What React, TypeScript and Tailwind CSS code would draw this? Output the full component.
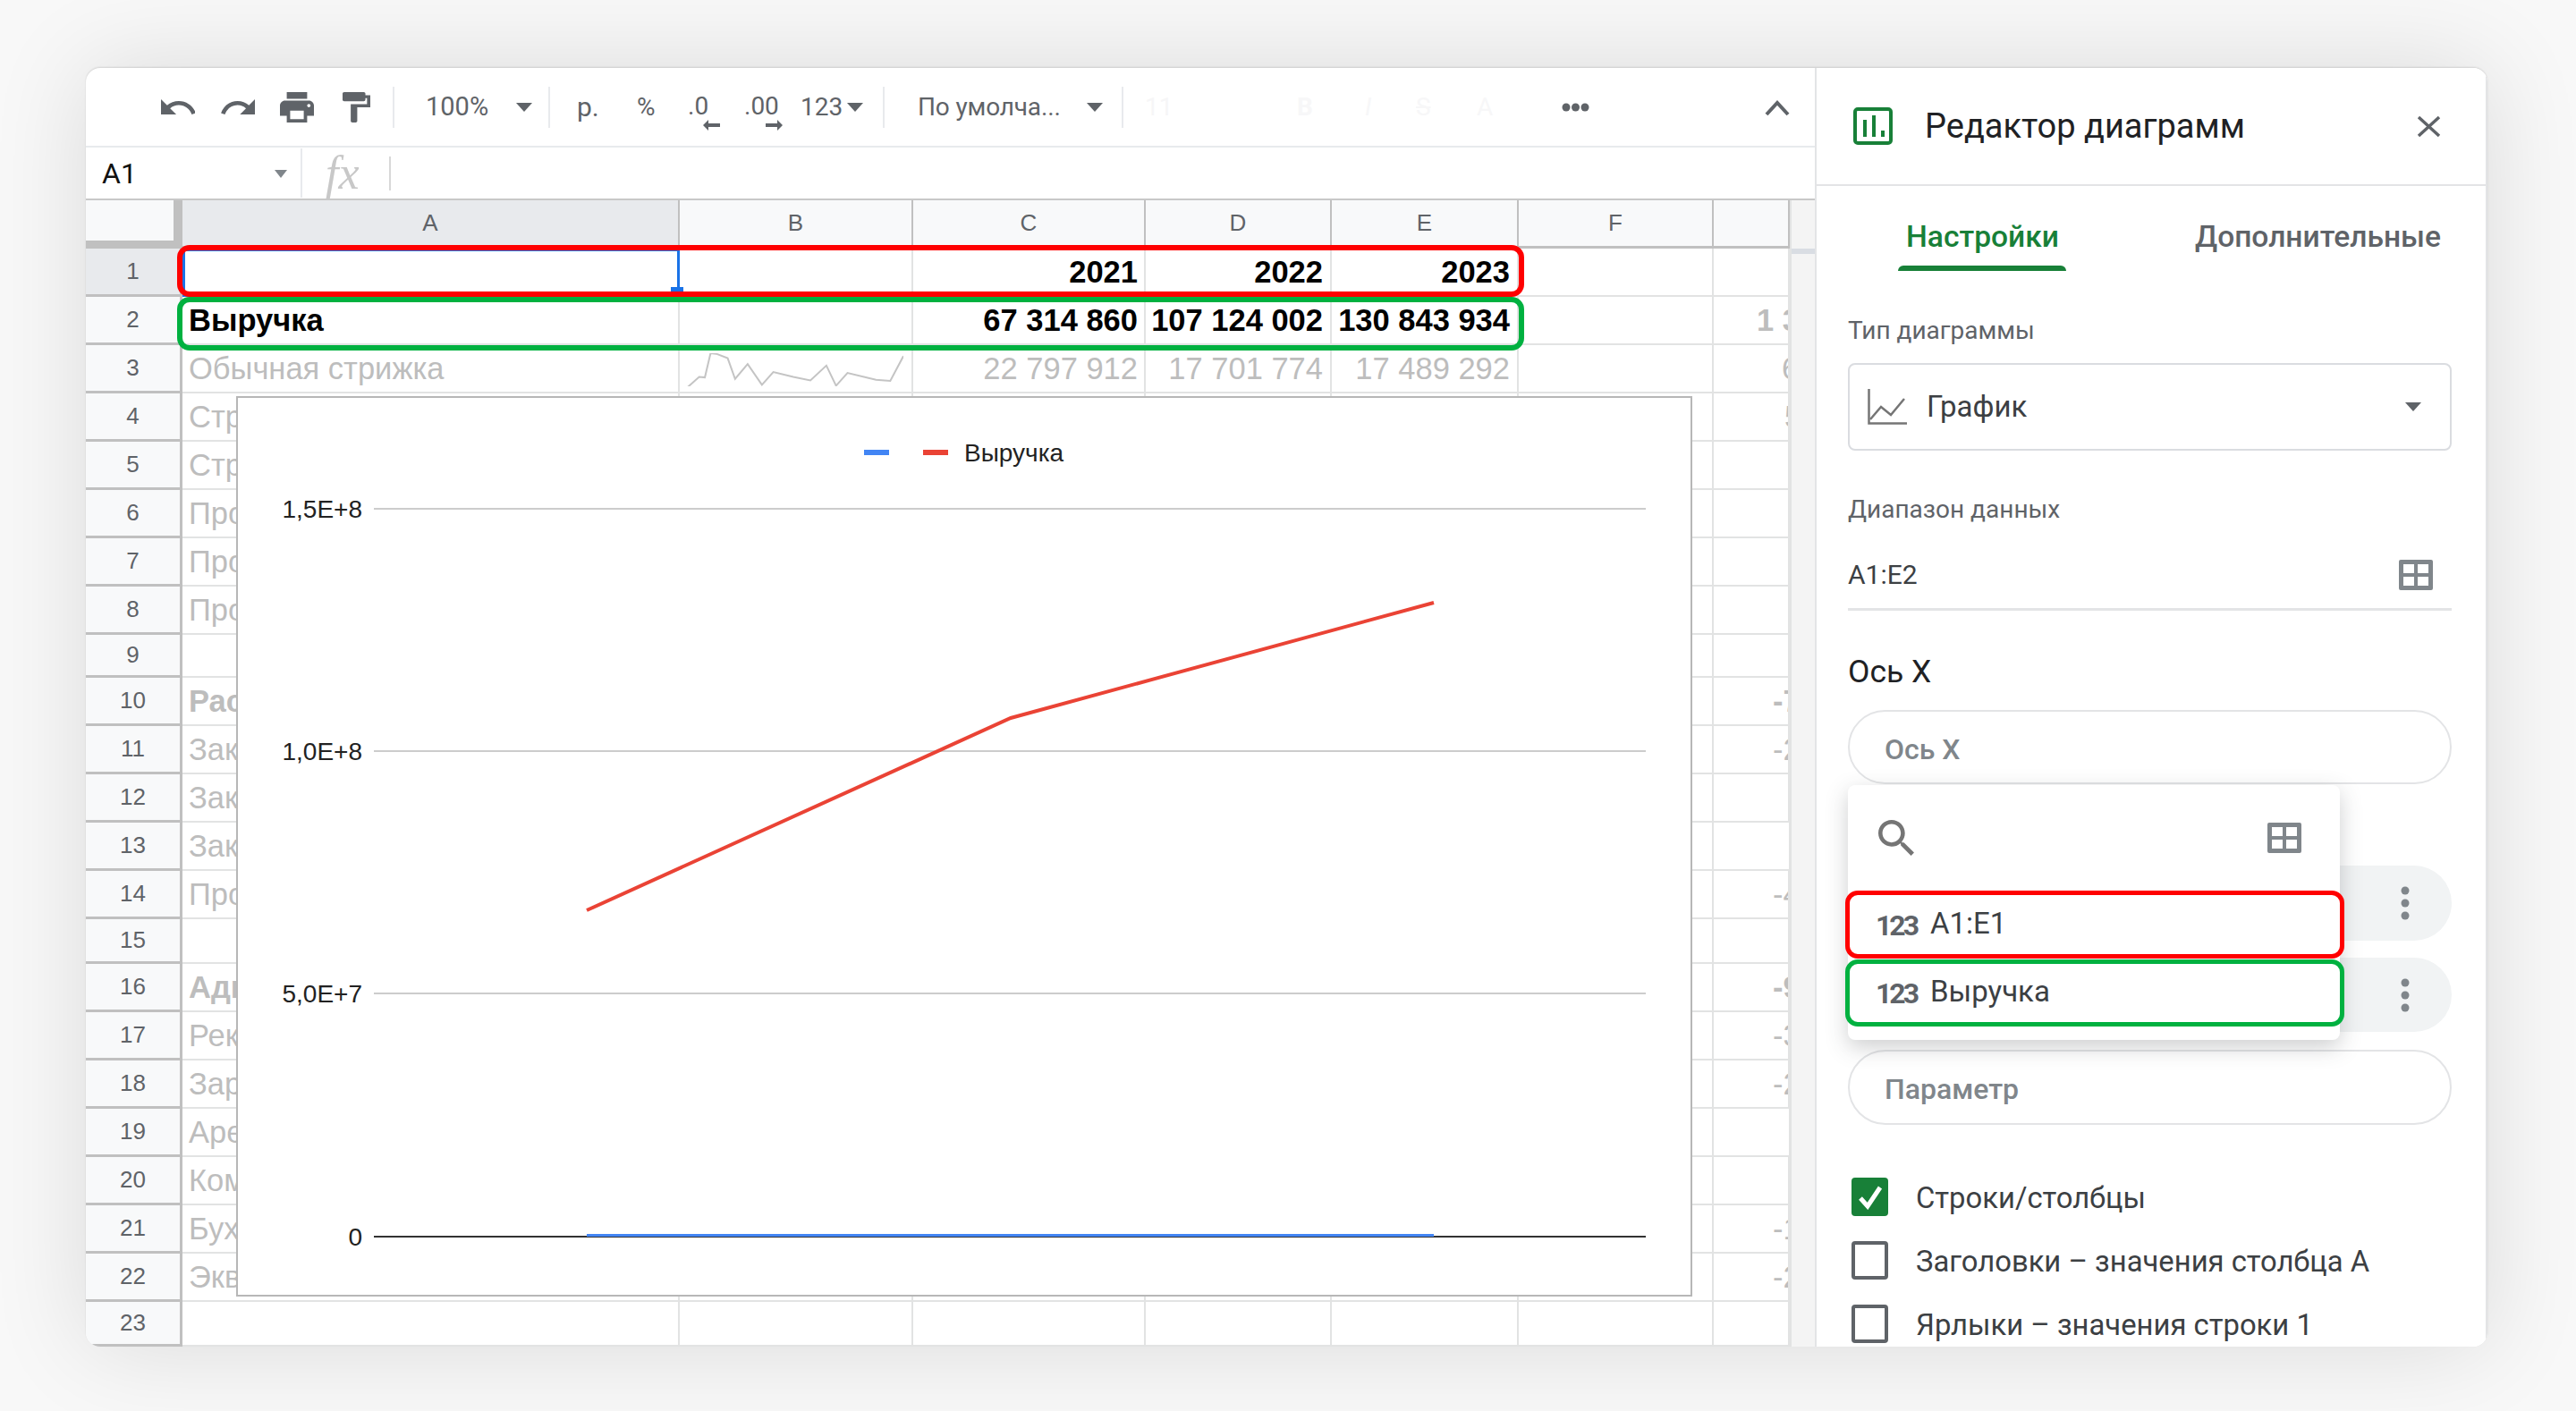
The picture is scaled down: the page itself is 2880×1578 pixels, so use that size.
import React from "react";

const Caret = ({ className = "" }: { className?: string }) => (
  <svg width="18" height="10" viewBox="0 0 18 10" className={`shrink-0 ${className}`}>
    <path d="M0 0h18L9 10z" fill="#5f6368" />
  </svg>
);

const Sep = ({ className = "" }: { className?: string }) => <div className={`w-[2px] h-[46px] bg-[#e8eaed] shrink-0 ${className}`} />;

const GridIcon = () => (
  <svg width="38" height="34" viewBox="0 0 38 34" className="shrink-0">
    <path fillRule="evenodd" clipRule="evenodd" d="M2 0h34a2 2 0 0 1 2 2v30a2 2 0 0 1-2 2H2a2 2 0 0 1-2-2V2a2 2 0 0 1 2-2zM5 5v10h12V5zM21 5v10h12V5zM5 19v10h12V19zM21 19v10h12V19z" fill="#80868b" />
  </svg>
);

const Kebab = () => (
  <svg width="10" height="38" viewBox="0 0 10 38">
    <circle cx="5" cy="5" r="4.5" fill="#80868b" />
    <circle cx="5" cy="19" r="4.5" fill="#80868b" />
    <circle cx="5" cy="33" r="4.5" fill="#80868b" />
  </svg>
);

const ArrowL = () => (
  <svg width="19" height="12" viewBox="0 0 19 12"><path d="M6 0v4h13v4H6v4L0 6z" fill="#5f6368" /></svg>
);
const ArrowR = () => (
  <svg width="19" height="12" viewBox="0 0 19 12"><path d="M13 0v4H0v4h13v4l6-6z" fill="#5f6368" /></svg>
);

const rows: { n: number; a: string; bold?: boolean; c?: string; d?: string; e?: string; g?: string; gp?: string; black?: boolean; h?: string }[] = [
  { n: 1, a: "", c: "2021", d: "2022", e: "2023", black: true, bold: true },
  { n: 2, a: "Выручка", c: "67 314 860", d: "107 124 002", e: "130 843 934", black: true, bold: true, g: "1 345", gp: "pl-[48px]" },
  { n: 3, a: "Обычная стрижка", c: "22 797 912", d: "17 701 774", e: "17 489 292", g: "6", gp: "pl-[76px]" },
  { n: 4, a: "Стрижка бороды", g: "5", gp: "pl-[79px]" },
  { n: 5, a: "Стрижка машинкой" },
  { n: 6, a: "Продажа" },
  { n: 7, a: "Продажа" },
  { n: 8, a: "Продажа" },
  { n: 9, a: "", h: "h-[48px]" },
  { n: 10, a: "Расходы", bold: true, g: "-7", gp: "pl-[66px]" },
  { n: 11, a: "Закупка", g: "-2", gp: "pl-[66px]" },
  { n: 12, a: "Закупка" },
  { n: 13, a: "Закупка", g: "5", gp: "pl-[84px]" },
  { n: 14, a: "Продвижение", g: "-4", gp: "pl-[66px]" },
  { n: 15, a: "", h: "h-[50px]" },
  { n: 16, a: "Административные", bold: true, g: "-9", gp: "pl-[66px]" },
  { n: 17, a: "Реклама", g: "-3", gp: "pl-[66px]" },
  { n: 18, a: "Зарплата", g: "-2", gp: "pl-[66px]" },
  { n: 19, a: "Аренда", g: "5", gp: "pl-[84px]" },
  { n: 20, a: "Коммунальные" },
  { n: 21, a: "Бухгалтерия", g: "-1", gp: "pl-[66px]" },
  { n: 22, a: "Эквайринг", g: "-2", gp: "pl-[66px]" },
];

const colHeads = [
  { l: "A", w: "w-[556px]", sel: true },
  { l: "B", w: "w-[261px]" },
  { l: "C", w: "w-[260px]" },
  { l: "D", w: "w-[208px]" },
  { l: "E", w: "w-[209px]" },
  { l: "F", w: "w-[218px]" },
  { l: "", w: "w-[85px]" },
];

const cell = "shrink-0 h-full border-r-2 border-b-2 border-[#e2e3e3] overflow-hidden whitespace-nowrap flex items-center";

function Row({ r }: { r: (typeof rows)[number] }) {
  const tone = r.black ? "text-black" : "text-[#bdbdbd]";
  const weight = r.bold ? "font-bold" : "";
  return (
    <div className={`flex ${r.h ?? "h-[54px]"} shrink-0 text-[34.5px] ${tone} ${weight}`}>
      <div className={`w-[108px] shrink-0 h-full flex items-center justify-center text-[26px] font-normal text-[#5f6368] border-r-[3px] border-b-[3px] border-[#c0c0c0] ${r.n === 1 ? "bg-[#e8eaed]" : "bg-[#f8f9fa]"}`}>
        {r.n}
      </div>
      <div className={`${cell} w-[556px] pl-[7px] pt-[2px]`}>{r.a}</div>
      <div className={`${cell} w-[261px]`}>
        {r.n === 3 && (
          <svg className="ml-[7px] mt-[3px]" width="243" height="37" viewBox="1062 968 381 112" preserveAspectRatio="none">
            <polyline
              points="1062,1088 1085,1048 1095,1050 1105,968 1115,970 1135,985 1148,1055 1170,1005 1195,1075 1215,1032 1250,1048 1280,1060 1308,1010 1325,1078 1345,1035 1395,1058 1420,1062 1443,978"
              fill="none"
              stroke="#c4c4c4"
              strokeWidth="2"
              vectorEffect="non-scaling-stroke"
            />
          </svg>
        )}
      </div>
      <div className={`${cell} w-[260px] justify-end pr-[7px] pt-[2px]`}>{r.c}</div>
      <div className={`${cell} w-[208px] justify-end pr-[8px] pt-[2px]`}>{r.d}</div>
      <div className={`${cell} w-[209px] justify-end pr-[8px] pt-[2px]`}>{r.e}</div>
      <div className={`${cell} w-[218px]`} />
      <div className={`${cell} w-[85px] border-r-0 pt-[2px] text-[#bdbdbd] ${r.gp ?? ""}`}>{r.g}</div>
    </div>
  );
}

function Chart() {
  const f = { fontFamily: "'Liberation Sans', Arial, sans-serif" };
  const labels = [
    { t: "1,5E+8", y: 124 },
    { t: "1,0E+8", y: 395 },
    { t: "5,0E+7", y: 666 },
    { t: "0", y: 938 },
  ];
  return (
    <div className="absolute left-[168px] top-[367px] w-[1628px] h-[1007px] bg-white border-2 border-[#b7b7b7]">
      <svg width="1624" height="1003" viewBox="0 0 1624 1003" className="block">
        <rect x="700" y="58" width="28" height="6" fill="#4285f4" />
        <rect x="766" y="58" width="28" height="6" fill="#ea4335" />
        <text x="812" y="71" fontSize="28" fill="#222" style={f}>Выручка</text>
        {labels.map((l, i) => (
          <g key={l.t}>
            <text x="139" y={l.y + 10} textAnchor="end" fontSize="28" fill="#222" style={f}>{l.t}</text>
            <line x1="152" x2="1574" y1={l.y} y2={l.y} stroke={i === 3 ? "#333" : "#ccc"} strokeWidth="2" />
          </g>
        ))}
        <line x1="390" x2="1337" y1="936.5" y2="936.5" stroke="#4285f4" strokeWidth="3" />
        <polyline points="390,573 864,358 1337,229" fill="none" stroke="#ea4335" strokeWidth="4" />
      </svg>
    </div>
  );
}

function Toolbar() {
  const t = "shrink-0 whitespace-nowrap text-[28px] text-[#5f6368] leading-none";
  return (
    <div className="h-[89px] flex items-center pl-[84px] border-b-2 border-[#e8eaed] font-['Roboto',sans-serif] relative">
      <svg width="38" height="17" viewBox="2 7 20 9" preserveAspectRatio="none" className="shrink-0">
        <path fill="#5f6368" d="M12.5 8c-2.65 0-5.05.99-6.9 2.6L2 7v9h9l-3.62-3.62c1.39-1.16 3.16-1.88 5.12-1.88 3.54 0 6.55 2.31 7.6 5.5l2.37-.78C21.08 11.03 17.15 8 12.5 8z" />
      </svg>
      <svg width="38" height="17" viewBox="1.5 7 20.5 9" preserveAspectRatio="none" className="shrink-0 ml-[29px]">
        <path fill="#5f6368" d="M18.4 10.6C16.55 8.99 14.15 8 11.5 8c-4.65 0-8.58 3.03-9.96 7.22L3.9 16c1.05-3.19 4.05-5.5 7.6-5.5 1.95 0 3.73.72 5.12 1.88L13 16h9V7l-3.6 3.6z" />
      </svg>
      <svg width="38" height="34" viewBox="2 3 20 18" preserveAspectRatio="none" className="shrink-0 ml-[28px]">
        <path fill="#5f6368" d="M19 8H5c-1.66 0-3 1.34-3 3v6h4v4h12v-4h4v-6c0-1.66-1.34-3-3-3zm-3 11H8v-5h8v5zm3-7c-.55 0-1-.45-1-1s.45-1 1-1 1 .45 1 1-.45 1-1 1zm-1-9H6v4h12V3z" />
      </svg>
      <svg width="31" height="34" viewBox="4 2 17 20" preserveAspectRatio="none" className="shrink-0 ml-[32px]">
        <path fill="#5f6368" d="M18 4V3c0-.55-.45-1-1-1H5c-.55 0-1 .45-1 1v4c0 .55.45 1 1 1h12c.55 0 1-.45 1-1V6h1v4H9v11c0 .55.45 1 1 1h2c.55 0 1-.45 1-1v-9h8V4h-3z" />
      </svg>
      <Sep className="ml-[25px]" />
      <span className={`${t} ml-[35px] w-[68px] text-[29px]`}>100%</span>
      <Caret className="ml-[33px]" />
      <Sep className="ml-[18px]" />
      <span className={`${t} ml-[30px] w-[23px] text-[30px]`}>р.</span>
      <span className={`${t} ml-[44px] w-[20px]`}>%</span>
      <div className="relative ml-[37px] w-[23px] shrink-0">
        <span className={t}>.0</span>
        <div className="absolute left-[17px] top-[29px]"><ArrowL /></div>
      </div>
      <div className="relative ml-[40px] w-[39px] shrink-0">
        <span className={t}>.00</span>
        <div className="absolute left-[24px] top-[29px]"><ArrowR /></div>
      </div>
      <span className={`${t} ml-[24px] w-[47px]`}>123</span>
      <Caret className="ml-[5px]" />
      <Sep className="ml-[22px]" />
      <span className={`${t} ml-[37px] w-[161px] tracking-[-0.15px]`}>По умолча...</span>
      <Caret className="ml-[28px]" />
      <Sep className="ml-[21px]" />
      <span className={`${t} ml-[24px] w-[30px] text-[#f6f6f7]`}>11</span>
      <span className={`${t} ml-[140px] w-[20px] text-[#f7f7f8] font-bold`}>B</span>
      <span className={`${t} ml-[56px] w-[20px] text-[#f7f7f8] italic`}>I</span>
      <span className={`${t} ml-[37px] w-[20px] text-[#f7f7f8] line-through`}>S</span>
      <span className={`${t} ml-[48px] w-[30px] text-[#f7f7f8]`}>A</span>
      <svg width="31" height="10" viewBox="0 0 31 10" className="shrink-0 ml-[65px]">
        <circle cx="5" cy="5" r="4.5" fill="#5f6368" /><circle cx="15.5" cy="5" r="4.5" fill="#5f6368" /><circle cx="26" cy="5" r="4.5" fill="#5f6368" />
      </svg>
      <svg width="28" height="18" viewBox="0 0 28 18" className="absolute left-[1877px] top-[36px]">
        <path d="M2 16 14 3l12 13" fill="none" stroke="#5f6368" strokeWidth="4" />
      </svg>
    </div>
  );
}

function FormulaBar() {
  return (
    <div className="h-[57px] flex items-center relative">
      <span className="ml-[18px] w-[174px] text-[32px] text-[#111] font-['Roboto',sans-serif] leading-none shrink-0">A1</span>
      <svg width="14" height="9" viewBox="0 0 14 9" className="shrink-0 ml-[19px] mt-[2px]"><path d="M0 0h14L7 9z" fill="#80868b" /></svg>
      <div className="w-[2px] h-[55px] bg-[#e8eaed] ml-[15px] shrink-0" />
      <span className="ml-[26px] w-[44px] font-['Liberation_Serif',serif] italic text-[52px] text-[#c8c8c8] leading-none shrink-0">fx</span>
      <div className="w-[2px] h-[38px] bg-[#d8d8d8] ml-[27px] shrink-0" />
    </div>
  );
}

function Grid() {
  return (
    <div className="flex-1 flex font-['Liberation_Sans',Arial,sans-serif] min-h-0 border-t-2 border-[#c8c8c8]">
      <div className="w-[1905px] shrink-0 flex flex-col">
        <div className="flex h-[54px] shrink-0 text-[26px] text-[#5f6368]">
          <div className="w-[108px] h-full shrink-0 bg-[#f8f9fa] border-r-[10px] border-b-[9px] border-[#c0c0c0]" />
          {colHeads.map((c) => (
            <div key={c.w + c.l} className={`${c.w} shrink-0 h-full flex items-center justify-center border-r-2 border-b-[3px] border-[#c0c0c0] ${c.sel ? "bg-[#e8eaed]" : "bg-[#f8f9fa]"}`}>
              {c.l}
            </div>
          ))}
        </div>
        {rows.map((r) => <Row key={r.n} r={r} />)}
        <div className="flex flex-1 text-[26px] text-[#5f6368]">
          <div className="w-[108px] shrink-0 flex items-center justify-center bg-[#f8f9fa] border-r-[3px] border-b-[3px] border-[#c0c0c0]">23</div>
          <div className={`${cell} w-[556px]`} />
          <div className={`${cell} w-[261px]`} />
          <div className={`${cell} w-[260px]`} />
          <div className={`${cell} w-[208px]`} />
          <div className={`${cell} w-[209px]`} />
          <div className={`${cell} w-[218px]`} />
          <div className={`${cell} w-[85px] border-r-0`} />
        </div>
      </div>
      <div className="flex-1 bg-[#f4f4f4] border-l-2 border-[#e2e3e3] pt-[54px]">
        <div className="h-[6px] bg-[#d9dde3]" />
      </div>
    </div>
  );
}

const Icon123 = () => (
  <span className="w-[44px] shrink-0 font-['Roboto',sans-serif] font-bold text-[32px] tracking-[-3px] text-[#5f6368] leading-none mt-[4px]">123</span>
);

function Dropdown() {
  return (
    <div className="absolute left-[35px] top-[802px] w-[550px] h-[285px] bg-white rounded-lg shadow-[0_8px_24px_rgba(60,64,67,0.25)]">
      <div className="h-[118px] flex items-center pl-[34px]">
        <svg width="40" height="40" viewBox="3 3 17.5 17.5" className="shrink-0">
          <path fill="#757575" d="M15.5 14h-.79l-.28-.27C15.41 12.59 16 11.11 16 9.5 16 5.91 13.09 3 9.5 3S3 5.91 3 9.5 5.91 16 9.5 16c1.61 0 3.09-.59 4.23-1.57l.27.28v.79l5 4.99L20.49 19l-4.99-5zm-6 0C7.01 14 5 11.99 5 9.5S7.01 5 9.5 5 14 7.01 14 9.5 11.99 14 9.5 14z" />
        </svg>
        <div className="ml-[395px]"><GridIcon /></div>
      </div>
      <div className="-ml-[3px] -mr-[5px] h-[76px] border-[5px] border-[#ff0000] rounded-[14px] flex items-center pl-[29px] pb-[3px] gap-[17px] bg-white text-[33px] text-[#3c4043]">
        <Icon123 />
        <span>A1:E1</span>
      </div>
      <div className="-ml-[3px] -mr-[5px] mt-[1px] h-[75px] border-[5px] border-[#00b140] rounded-[14px] flex items-center pl-[29px] pb-[3px] gap-[17px] bg-white text-[33px] text-[#3c4043]">
        <Icon123 />
        <span>Выручка</span>
      </div>
    </div>
  );
}

function CheckRow({ checked, label, className }: { checked?: boolean; label: string; className: string }) {
  return (
    <div className={`flex items-center h-[43px] pl-[4px] ${className}`}>
      {checked ? (
        <div className="w-[41px] h-[43px] rounded-[4px] bg-[#188038] flex items-center justify-center shrink-0">
          <svg width="30" height="28" viewBox="0 0 30 28"><path d="M4 15l8 9L26 3" fill="none" stroke="#fff" strokeWidth="5" /></svg>
        </div>
      ) : (
        <div className="w-[41px] h-[43px] rounded-[4px] border-[4px] border-[#5f6368] shrink-0" />
      )}
      <span className="ml-[31px] mt-[4px] text-[32.8px] text-[#3c4043] whitespace-nowrap">{label}</span>
    </div>
  );
}

function Panel() {
  return (
    <div className="w-[752px] shrink-0 relative bg-white border-l-2 border-r-2 border-[#e3e4e6] font-['Roboto',sans-serif] overflow-hidden">
      <div className="h-[132px] flex items-center border-b-2 border-[#e3e4e6] pl-[41px]">
        <svg width="44" height="42" viewBox="0 0 44 42" className="shrink-0">
          <rect x="2" y="2" width="40" height="38" rx="3" fill="none" stroke="#188038" strokeWidth="4" />
          <rect x="11" y="14" width="4" height="19" fill="#188038" />
          <rect x="21" y="9" width="4" height="24" fill="#188038" />
          <rect x="31" y="26" width="4" height="7" fill="#188038" />
        </svg>
        <span className="ml-[36px] text-[38px] text-[#202124] whitespace-nowrap">Редактор диаграмм</span>
        <svg width="27" height="25" viewBox="0 0 27 25" className="ml-[192px] shrink-0">
          <path d="M2 2l23 21M25 2L2 23" stroke="#5f6368" strokeWidth="3.5" fill="none" />
        </svg>
      </div>
      <div className="pl-[35px] pr-[38px]">
        <div className="h-[95px] relative text-[33.6px] font-medium">
          <span className="absolute left-[65px] top-[36px] text-[#188038] whitespace-nowrap leading-[42px]">Настройки</span>
          <div className="absolute left-[56px] top-[89px] w-[188px] h-[6px] rounded-t-[6px] bg-[#188038]" />
          <span className="absolute left-[388px] top-[36px] text-[#5f6368] whitespace-nowrap leading-[42px]">Дополнительные</span>
        </div>
        <div className="mt-[50px] h-[34px] flex items-center text-[28px] text-[#5f6368]">Тип диаграммы</div>
        <div className="mt-[19px] h-[98px] border-2 border-[#dadce0] rounded-lg flex items-center pl-[20px] pr-[32px]">
          <svg width="44" height="40" viewBox="0 0 44 40" className="shrink-0">
            <path d="M1.5 0v38.5H44" fill="none" stroke="#757575" strokeWidth="2.5" />
            <path d="M3 34 15 20l11 9L41 11" fill="none" stroke="#757575" strokeWidth="2.5" />
          </svg>
          <span className="ml-[22px] text-[33px] text-[#3c4043]">График</span>
          <Caret className="ml-auto" />
        </div>
        <div className="mt-[49px] h-[34px] flex items-center text-[28px] text-[#5f6368]">Диапазон данных</div>
        <div className="mt-[18px] h-[78px] border-b-[3px] border-[#e3e4e6] flex items-center justify-between pr-[21px] text-[30px] text-[#3c4043]">
          <span>A1:E2</span>
          <GridIcon />
        </div>
        <div className="mt-[51px] h-[34px] flex items-center pt-[2px] text-[35.5px] text-[#202124]">Ось X</div>
        <div className="mt-[26px] h-[83px] border-2 border-[#e3e4e6] rounded-full flex items-center pl-[39px] pt-[4px] text-[32px] font-medium text-[#80868b]">Ось X</div>
        <div className="mt-[91px] h-[84px] rounded-full bg-[#f1f3f4] flex items-center justify-end pr-[47px]"><Kebab /></div>
        <div className="mt-[19px] h-[83px] rounded-full bg-[#f1f3f4] flex items-center justify-end pr-[47px]"><Kebab /></div>
        <div className="mt-[20px] h-[84px] border-2 border-[#e3e4e6] rounded-full flex items-center pl-[39px] pt-[4px] text-[32px] font-medium text-[#80868b]">Параметр</div>
        <CheckRow checked label="Строки/столбцы" className="mt-[59px]" />
        <CheckRow label="Заголовки – значения столбца А" className="mt-[28px]" />
        <CheckRow label="Ярлыки – значения строки 1" className="mt-[28px]" />
      </div>
      <Dropdown />
    </div>
  );
}

export default function App() {
  return (
    <div className="w-[2880px] h-[1578px] bg-[#f8f8f8] pt-[76px] pl-[96px] overflow-hidden">
      <div className="relative w-[2685px] h-[1430px] flex bg-white rounded-[16px] overflow-hidden shadow-[0_-1px_2px_rgba(0,0,0,0.12),0_0_110px_rgba(0,0,0,0.12)]">
        <div className="w-[1933px] shrink-0 flex flex-col h-full">
          <Toolbar />
          <FormulaBar />
          <Grid />
        </div>
        <Panel />
        <Chart />
        <div className="absolute left-[108px] top-[202px] w-[556px] h-[54px] border-[3px] border-[#1a73e8]">
          <div className="absolute right-[-7px] bottom-[3px] w-[14px] h-[5px] bg-[#1a73e8]" />
        </div>
        <div className="absolute left-[102px] top-[198px] w-[1506px] h-[58px] border-[6px] border-[#ff0000] rounded-[14px]" />
        <div className="absolute left-[102px] top-[256px] w-[1506px] h-[60px] border-[6px] border-[#00b140] rounded-[14px]" />
      </div>
    </div>
  );
}
